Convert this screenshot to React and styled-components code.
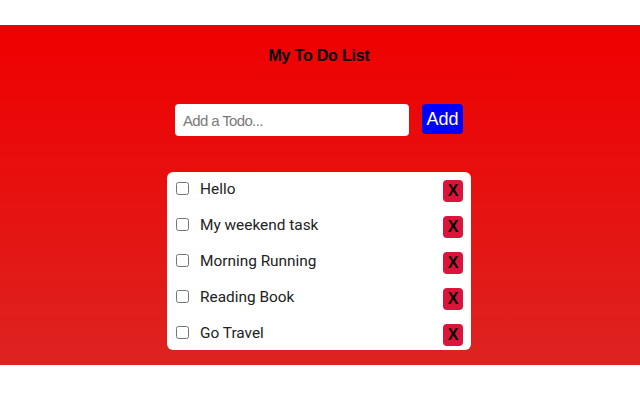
import React from "react";
import styled, { createGlobalStyle } from "styled-components";

const Global = createGlobalStyle`
  html, body { margin: 0; padding: 0; background: #fff; }
  body { font-family: "Liberation Sans", Arial, sans-serif; }
  * { box-sizing: border-box; }
`;

const Page = styled.div`
  padding-top: 25px;
`;

const Band = styled.main`
  height: 340px;
  padding-right: 2px;
  background: linear-gradient(to bottom, #ef0000 0%, #dd2320 100%);
  display: flex;
  flex-direction: column;
  align-items: center;
`;

const Title = styled.h1`
  margin: 21px 0 0;
  font-size: 16px;
  line-height: 20px;
  font-weight: 700;
  letter-spacing: -0.2px;
  color: #000;
`;

const Form = styled.form`
  display: flex;
  align-items: flex-start;
  gap: 13px;
  margin-top: 38px;
`;

const Input = styled.input`
  width: 234px;
  height: 32px;
  border: none;
  border-radius: 4px;
  padding: 0 8px;
  font-family: "Liberation Sans", Arial, sans-serif;
  font-size: 15px;
  letter-spacing: -0.65px;
  background: #fff;
  outline: none;
  &::placeholder { color: #7a7a7a; }
`;

const AddButton = styled.button`
  width: 41px;
  height: 30px;
  border: none;
  border-radius: 4px;
  background: #0000ff;
  color: #fff;
  font-family: "Liberation Sans", Arial, sans-serif;
  font-size: 18px;
  padding: 0;
`;

const Card = styled.ul`
  list-style: none;
  margin: 36px 0 0;
  padding: 0;
  width: 304px;
  background: #fff;
  border-radius: 6px;
`;

const Row = styled.li`
  height: ${p => (p.$last ? 34 : 36)}px;
  display: flex;
  align-items: flex-start;
  padding: 0 8px 0 9px;
`;

const Check = styled.input`
  width: 13px;
  height: 13px;
  margin: 10px 0 0;
  flex: none;
`;

const Label = styled.span`
  margin: 7px 0 0 11px;
  font-family: "Roboto", "Liberation Sans", sans-serif;
  font-size: 15.4px;
  line-height: 20px;
  color: #222;
  flex: 1;
`;

const Remove = styled.button`
  margin-top: 8px;
  width: 20px;
  height: 22px;
  border: none;
  border-radius: 4px;
  background: #dc143c;
  color: #000;
  font-family: "Liberation Sans", Arial, sans-serif;
  font-weight: 700;
  font-size: 16px;
  padding: 0;
  flex: none;
`;

const todos = ["Hello", "My weekend task", "Morning Running", "Reading Book", "Go Travel"];

export default function App() {
  return (
    <Page>
      <Global />
      <Band>
        <Title>My To Do List</Title>
        <Form onSubmit={e => e.preventDefault()}>
          <Input placeholder="Add a Todo..." autoFocus />
          <AddButton type="submit">Add</AddButton>
        </Form>
        <Card>
          {todos.map((t, i) => (
            <Row key={t} $last={i === todos.length - 1}>
              <Check type="checkbox" />
              <Label>{t}</Label>
              <Remove>X</Remove>
            </Row>
          ))}
        </Card>
      </Band>
    </Page>
  );
}
